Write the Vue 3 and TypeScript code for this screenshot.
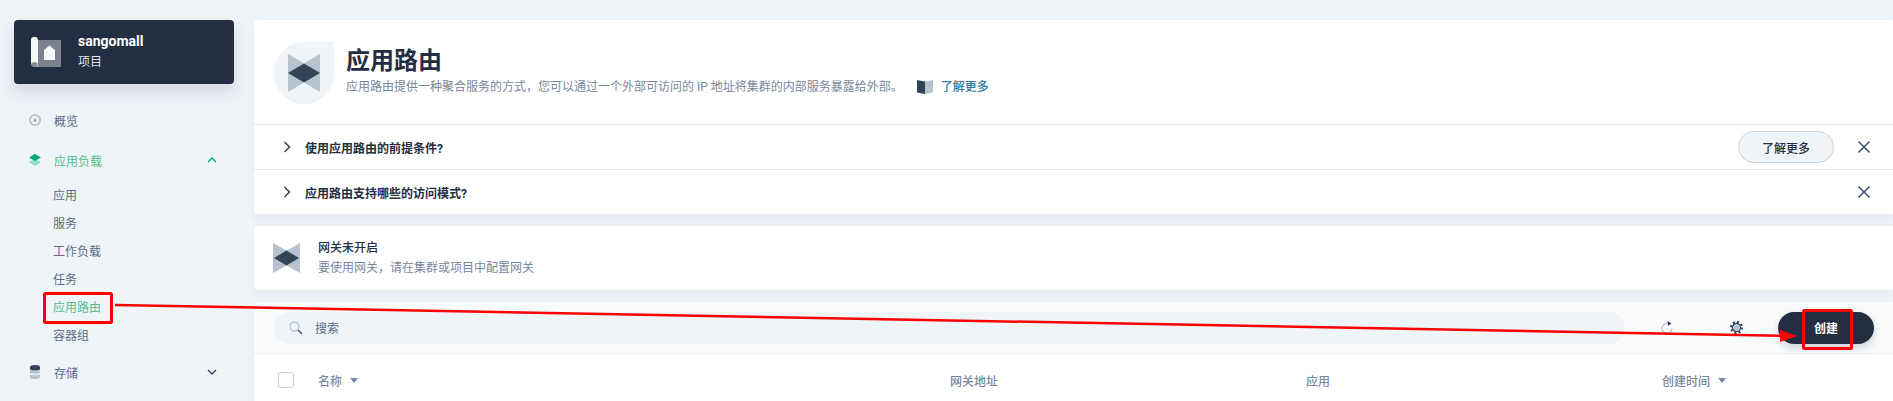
<script setup lang="ts">
const subItems: { label: string; active?: boolean }[] = [
  { label: '应用' },
  { label: '服务' },
  { label: '工作负载' },
  { label: '任务' },
  { label: '应用路由', active: true },
  { label: '容器组' },
]
const faqs: { q: string; more: boolean }[] = [
  { q: '使用应用路由的前提条件?', more: true },
  { q: '应用路由支持哪些的访问模式?', more: false },
]
</script>

<template>
  <div class="page">
    <aside class="side">
      <div class="project">
        <svg class="project-icon" width="30" height="30" viewBox="0 0 30 30">
          <path d="M6 3h24v27H6z" fill="#fff" opacity=".4" />
          <path d="M0 3q0-3 3-3h1q3 0 3 3v24q-1-2-3.500-2T0 27z" fill="#f5f7f9" />
          <path d="M0 27q0-3 3.500-3T7 27v3H3q-3 0-3-3z" fill="#fff" opacity=".45" />
          <path d="M13 13l5.500-4.500L24 13v10H13z" fill="#f5f7f9" />
        </svg>
        <div class="project-text">
          <div class="project-name">sangomall</div>
          <div class="project-type">项目</div>
        </div>
      </div>

      <nav class="nav">
        <div class="nav-item">
          <svg width="12" height="12" viewBox="0 0 12 12">
            <circle cx="6" cy="6" r="6" fill="#b6c2cd" />
            <circle cx="6" cy="6" r="4.200" fill="#eff4f9" />
            <path d="M5.300 7.500L6 3l.7 4.500z" fill="#36435c" />
          </svg>
          <span>概览</span>
        </div>
        <div class="nav-item active">
          <svg width="12" height="12" viewBox="0 0 12 12">
            <path d="M0 8l6-3 6 3-6 4z" fill="#90e0c5" />
            <path d="M0 3.500L6 0l6 3.500L6 7z" fill="#00aa72" />
          </svg>
          <span>应用负载</span>
          <svg class="caret" width="10" height="6" viewBox="0 0 10 6">
            <path d="M1 5l4-4 4 4" fill="none" stroke="#00aa72" stroke-width="1.400" />
          </svg>
        </div>
        <div class="sub-list">
          <div v-for="item in subItems" :key="item.label" class="sub-item" :class="{ active: item.active }">
            {{ item.label }}
          </div>
        </div>
        <div class="nav-item store">
          <svg width="10" height="14" viewBox="0 0 10 14">
            <path d="M0 2q0-2 5-2t5 2v2q0 1.500-5 1.500T0 4z" fill="#36435c" />
            <path d="M0 5.500q5 1.500 10 0V8q-5 1.500-10 0z" fill="#b6c2cd" />
            <path d="M0 9.500q5 1.500 10 0V12q0 2-5 2t-5-2z" fill="#b6c2cd" />
          </svg>
          <span>存储</span>
          <svg class="caret" width="10" height="6" viewBox="0 0 10 6">
            <path d="M1 1l4 4 4-4" fill="none" stroke="#36435c" stroke-width="1.400" />
          </svg>
        </div>
      </nav>
    </aside>

    <main class="main">
      <section class="card head-card">
        <div class="banner">
          <div class="banner-icon">
            <svg width="32" height="38" viewBox="0 0 32 38">
              <path d="M0 0l16 9.500L32 0v38l-16-9.500L0 38z" fill="#b6c2cd" />
              <path d="M0 19l16-9.500L32 19l-16 9.500z" fill="#324558" />
            </svg>
          </div>
          <div class="banner-text">
            <h1>应用路由</h1>
            <p>
              应用路由提供一种聚合服务的方式，您可以通过一个外部可访问的 IP 地址将集群的内部服务暴露给外部。
              <span class="learn">
                <svg width="16" height="14" viewBox="0 0 16 14">
                  <path d="M0 0l8 1.500V14L0 12.500z" fill="#324558" />
                  <path d="M8 1.500L16 0v12.500L8 14z" fill="#b6c2cd" />
                </svg>
                <a>了解更多</a>
              </span>
            </p>
          </div>
        </div>
        <div v-for="f in faqs" :key="f.q" class="faq">
          <svg width="8" height="12" viewBox="0 0 8 12">
            <path d="M1.500 1l5 5-5 5" fill="none" stroke="#36435c" stroke-width="1.500" />
          </svg>
          <span class="faq-q">{{ f.q }}</span>
          <button v-if="f.more" class="more-btn">了解更多</button>
          <svg class="close" width="12" height="12" viewBox="0 0 12 12">
            <path d="M.5.500l11 11M11.500.5l-11 11" stroke="#36435c" stroke-width="1.400" />
          </svg>
        </div>
      </section>

      <section class="card gateway">
        <svg width="27" height="30" viewBox="0 0 27 30">
          <path d="M0 0l13.500 7.500L27 0v30l-13.500-7.500L0 30z" fill="#b6c2cd" />
          <path d="M1 15l12.500-7.500L26 15l-12.500 7.500z" fill="#324558" />
        </svg>
        <div class="gateway-text">
          <div class="gateway-title">网关未开启</div>
          <div class="gateway-sub">要使用网关，请在集群或项目中配置网关</div>
        </div>
      </section>

      <section class="card table">
        <div class="toolbar">
          <div class="search">
            <svg width="14" height="14" viewBox="0 0 14 14">
              <circle cx="5.500" cy="5.500" r="4.500" fill="none" stroke="#b6c2cd" stroke-width="1.300" />
              <path d="M9 9l4 4" stroke="#36435c" stroke-width="1.300" />
            </svg>
            <span>搜索</span>
          </div>
          <svg class="tool-refresh" width="12" height="13" viewBox="0 0 12 13">
            <path d="M7.500 2.500A5 5 0 1 0 11 7.500" fill="none" stroke="#b6c2cd" stroke-width="1.200" />
            <path d="M6.500 0l4 2.500-3.500 2.500z" fill="#36435c" />
          </svg>
          <svg class="tool-gear" width="13" height="13" viewBox="0 0 12 12">
            <circle cx="6" cy="6" r="5" fill="none" stroke="#36435c" stroke-width="2" stroke-dasharray="1.900 2" />
            <circle cx="6" cy="6" r="3.700" fill="none" stroke="#36435c" stroke-width="1.200" />
            <circle cx="6" cy="6" r="2.500" fill="#b6c2cd" />
          </svg>
          <button class="create">创建</button>
        </div>
        <div class="thead">
          <div class="col-name">
            <span class="check"></span>
            <span>名称</span>
            <i class="sort"></i>
          </div>
          <div>网关地址</div>
          <div>应用</div>
          <div class="col-time">
            <span>创建时间</span>
            <i class="sort"></i>
          </div>
        </div>
      </section>
    </main>

    <svg class="annotation" width="1893" height="401" viewBox="0 0 1893 401">
      <rect x="44.500" y="293.500" width="67" height="29" fill="none" stroke="#f00" stroke-width="3" rx="1" />
      <path d="M115 305L1782 335.700" stroke="#f00" stroke-width="2.500" fill="none" />
      <path d="M1780 330l17 6-17 6z" fill="#f00" />
      <rect x="1803.500" y="310.500" width="48" height="38" fill="none" stroke="#f00" stroke-width="3" rx="1" />
    </svg>
  </div>
</template>

<style>
html, body { margin: 0; overflow: hidden; background: #eff4f9; }
</style>

<style scoped>
.page {
  position: relative;
  display: flex;
  width: 1893px;
  height: 401px;
  overflow: hidden;
  background: #eff4f9;
  font-family: Roboto, "Noto Sans CJK SC", sans-serif;
  font-size: 12px;
  color: #242e42;
}
.side {
  flex: 0 0 254px;
  box-sizing: border-box;
  padding: 20px 20px 0 14px;
}
.project {
  display: flex;
  align-items: center;
  height: 64px;
  padding-left: 17px;
  border-radius: 4px;
  background: #242e42;
  box-shadow: 0 8px 16px rgba(36, 46, 66, 0.15);
  color: #fff;
}
.project-text { margin-left: 17px; margin-top: -2px; }
.project-name { font-size: 14px; font-weight: 700; line-height: 20px; }
.project-type { margin-top: 1px; line-height: 20px; color: #dbe3ea; }
.nav { margin-top: 24px; padding-left: 15px; color: #5b6b85; }
.nav-item {
  display: flex;
  align-items: center;
  height: 24px;
  margin-bottom: 16px;
}
.nav-item > svg:first-child { flex: 0 0 12px; margin-right: 13px; }
.nav-item.active { color: #55bc8a; margin-bottom: 10px; }
.caret { margin-left: auto; margin-right: 17px; }
.sub-list { padding-left: 24px; margin-bottom: 10px; }
.sub-item { height: 28px; line-height: 28px; }
.sub-item.active { color: #55bc8a; }
.main {
  flex: 1;
  display: flex;
  flex-direction: column;
  gap: 12px;
  padding-top: 20px;
  min-width: 0;
}
.card {
  flex: none;
  background: #fff;
  border-radius: 4px 0 0 4px;
  box-shadow: 0 4px 8px rgba(36, 46, 66, 0.06);
}
.banner {
  display: flex;
  align-items: center;
  box-sizing: border-box;
  height: 105px;
  padding-left: 20px;
  border-bottom: 1px solid #e3e9ef;
}
.banner-icon {
  display: flex;
  align-items: center;
  justify-content: center;
  box-sizing: border-box;
  width: 60px;
  height: 62px;
  margin-top: 1px;
  background: #eff4f9;
  border-radius: 50% 0 50% 50%;
}
.banner-text { margin-left: 12px; margin-top: -2px; }
h1 {
  margin: 0;
  font-size: 24px;
  font-weight: 700;
  line-height: 32px;
  color: #242e42;
}
p {
  display: flex;
  align-items: center;
  margin: 0;
  line-height: 20px;
  color: #79879c;
}
.learn { display: inline-flex; align-items: center; margin-left: 14px; }
.learn a { margin-left: 8px; font-weight: 500; color: #2a7ba6; }
.faq {
  display: flex;
  align-items: center;
  box-sizing: border-box;
  height: 45px;
  padding-left: 29px;
  border-bottom: 1px solid #e3e9ef;
}
.faq:last-child { border-bottom: 0; height: 44px; }
.faq-q { margin-left: 14px; font-weight: 700; }
.more-btn {
  box-sizing: border-box;
  width: 96px;
  height: 32px;
  margin-left: auto;
  border: 1px solid #ccd3db;
  border-radius: 16px;
  background: #eff4f9;
  font: 500 12px Roboto, "Noto Sans CJK SC", sans-serif;
  color: #242e42;
}
.close { margin-left: 24px; margin-right: 23px; }
.faq:last-child .close { margin-left: auto; }
.gateway {
  display: flex;
  align-items: center;
  height: 64px;
  padding-left: 19px;
}
.gateway-text { margin-left: 18px; }
.gateway-title { line-height: 20px; font-weight: 500; }
.gateway-sub { line-height: 20px; color: #79879c; }
.table { flex: none; height: 120px; }
.toolbar {
  display: flex;
  align-items: center;
  box-sizing: border-box;
  height: 52px;
  padding: 0 19px 0 20px;
  background: #f9fbfd;
  border-bottom: 1px solid #eaf0f6;
  border-radius: 4px 0 0 0;
}
.search {
  display: flex;
  align-items: center;
  flex: 0 0 1351px;
  height: 32px;
  box-sizing: border-box;
  padding-left: 15px;
  border-radius: 16px;
  background: #eff4f9;
  color: #5b6b85;
}
.search span { margin-left: 12px; }
.tool-refresh { margin-left: 36px; }
.tool-gear { margin-left: 57px; }
.create {
  width: 96px;
  height: 32px;
  margin-left: 35px;
  border: 0;
  border-radius: 16px;
  background: #242e42;
  box-shadow: 0 4px 8px rgba(36, 46, 66, 0.2);
  color: #fff;
  font: 700 12px Roboto, "Noto Sans CJK SC", sans-serif;
}
.thead {
  display: grid;
  grid-template-columns: 672px 356px 356px 1fr;
  align-items: center;
  height: 52px;
  padding: 0 0 0 24px;
  color: #79879c;
  font-weight: 500;
}
.col-name, .col-time { display: flex; align-items: center; }
.check {
  box-sizing: border-box;
  width: 16px;
  height: 16px;
  margin-right: 24px;
  border: 1px solid #c7d0d9;
  border-radius: 2px;
  background: #fff;
}
.sort {
  width: 0;
  height: 0;
  margin-left: 8px;
  border-left: 4.500px solid transparent;
  border-right: 4.500px solid transparent;
  border-top: 5px solid #79879c;
}
.annotation { position: absolute; left: 0; top: 0; pointer-events: none; }
</style>
